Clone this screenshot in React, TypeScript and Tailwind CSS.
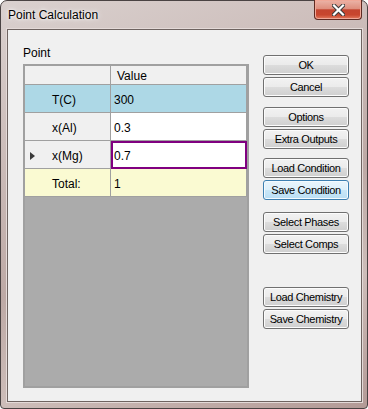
import React from 'react';

interface GridRow {
  name: string;
  value: string;
  headClass: string;
  cellClass: string;
  current?: boolean;
}

const rows: GridRow[] = [
  { name: 'T(C)', value: '300', headClass: 'bg-[#add8e6]', cellClass: 'bg-[#add8e6]' },
  { name: 'x(Al)', value: '0.3', headClass: 'bg-[#f0f0f0]', cellClass: 'bg-white' },
  { name: 'x(Mg)', value: '0.7', headClass: 'bg-[#f0f0f0]', cellClass: 'bg-white', current: true },
  { name: 'Total:', value: '1', headClass: 'bg-[#fafad2]', cellClass: 'bg-[#fafad2]' },
];

function WinButton({ label, focused = false }: { label: string; focused?: boolean }) {
  return (
    <button
      className={
        focused
          ? 'h-[20px] w-[86px] rounded-[3px] border border-[#3c7fb1] bg-[linear-gradient(#eaf5fc_0%,#dcf0fb_50%,#c9e7f8_50%,#b9def4_100%)] text-[11px] leading-[13px] tracking-[-0.35px] text-black shadow-[inset_0_0_0_1px_#f4fbff]'
          : 'h-[20px] w-[86px] rounded-[3px] border border-[#707070] bg-[linear-gradient(#f2f2f2_0%,#ebebeb_50%,#dddddd_50%,#cfcfcf_100%)] text-[11px] leading-[13px] tracking-[-0.35px] text-black shadow-[inset_0_0_0_1px_#fcfcfc]'
      }
    >
      {label}
    </button>
  );
}

function CloseGlyph() {
  return (
    <svg width="13" height="12" viewBox="0 0 13 12">
      <path d="M2 1.5 L11 10.5 M11 1.5 L2 10.5" stroke="#3b3b3b" strokeWidth="4.2" strokeLinecap="square" />
      <path d="M2 1.5 L11 10.5 M11 1.5 L2 10.5" stroke="#ffffff" strokeWidth="2.2" strokeLinecap="square" />
    </svg>
  );
}

export default function App() {
  return (
    <div
      className="flex h-[409px] w-[368px] flex-col rounded-t-[7px] rounded-b-[4px] border border-[#4a4343] bg-[linear-gradient(160deg,#dad1cf_0%,#cbbbb8_30%,#bda9a5_55%,#cdbdb9_75%,#b39a96_100%)] pb-[6px] pl-[6px] pr-[5px] font-['Liberation_Sans',Arial,sans-serif]"
    >
      {/* Title bar */}
      <div className="flex h-[28px] items-start justify-between">
        <span className="mt-[7px] ml-[1px] text-[12px] leading-[14px] text-black [text-shadow:0_0_6px_#ffffff,0_0_3px_#ffffff]">
          Point Calculation
        </span>
        <div className="-mt-px flex h-[20px] w-[48px] items-center justify-center rounded-b-[4px] border border-t-0 border-[#5e2a22] bg-[linear-gradient(#ecb4a8_0%,#de8f7e_45%,#c4452f_52%,#c8462e_78%,#e27b5f_100%)] shadow-[inset_0_0_0_1px_#f0a898]">
          <CloseGlyph />
        </div>
      </div>

      {/* Client area */}
      <div className="flex flex-1 border border-[#6e6360] bg-[#f0f0f0] shadow-[0_0_0_1px_#e4dad8]">
        <div className="flex flex-col pl-[15px] pt-[16px]">
          <div className="text-[12px] leading-[14px] text-black">Point</div>
          <div className="mt-[4px] flex h-[324px] w-[226px] flex-col border-2 border-[#a0a0a0] bg-[#ababab] text-[12px] leading-[14px] text-black">
            {/* header */}
            <div className="flex h-[19px] border-b border-[#a0a0a0] bg-[#f0f0f0]">
              <div className="w-[86px] border-r border-[#a0a0a0]" />
              <div className="w-[136px] border-r border-[#a0a0a0] pl-[6px] pt-[3px]">Value</div>
            </div>
            {rows.map((r) => (
              <div key={r.name} className="flex h-[28px] border-b border-[#a0a0a0]">
                <div className={`flex w-[86px] items-center border-r border-[#a0a0a0] pl-[5px] pt-[2px] ${r.headClass}`}>
                  <span className="flex w-[22px] items-center">
                    {r.current && (
                      <svg width="5" height="8" viewBox="0 0 5 8">
                        <path d="M0 0 L5 4 L0 8 Z" fill="#3a3a3a" />
                      </svg>
                    )}
                  </span>
                  <span>{r.name}</span>
                </div>
                <div className={`relative flex w-[136px] items-center border-r border-[#a0a0a0] pl-[3px] pt-[2px] ${r.cellClass}`}>
                  {r.value}
                  {r.current && (
                    <div className="absolute -bottom-px -right-px left-0 top-0 border-2 border-[#800080]" />
                  )}
                </div>
              </div>
            ))}
            <div className="flex-1" />
          </div>
        </div>

        <div className="ml-[14px] flex flex-col pt-[25px]">
          <div className="flex flex-col gap-[2px]">
            <WinButton label="OK" />
            <WinButton label="Cancel" />
          </div>
          <div className="mt-[10px] flex flex-col gap-[2px]">
            <WinButton label="Options" />
            <WinButton label="Extra Outputs" />
          </div>
          <div className="mt-[9px] flex flex-col gap-[2px]">
            <WinButton label="Load Condition" />
            <WinButton label="Save Condition" focused />
          </div>
          <div className="mt-[12px] flex flex-col gap-[2px]">
            <WinButton label="Select Phases" />
            <WinButton label="Select Comps" />
          </div>
          <div className="mt-[33px] flex flex-col gap-[2px]">
            <WinButton label="Load Chemistry" />
            <WinButton label="Save Chemistry" />
          </div>
        </div>
      </div>
    </div>
  );
}
